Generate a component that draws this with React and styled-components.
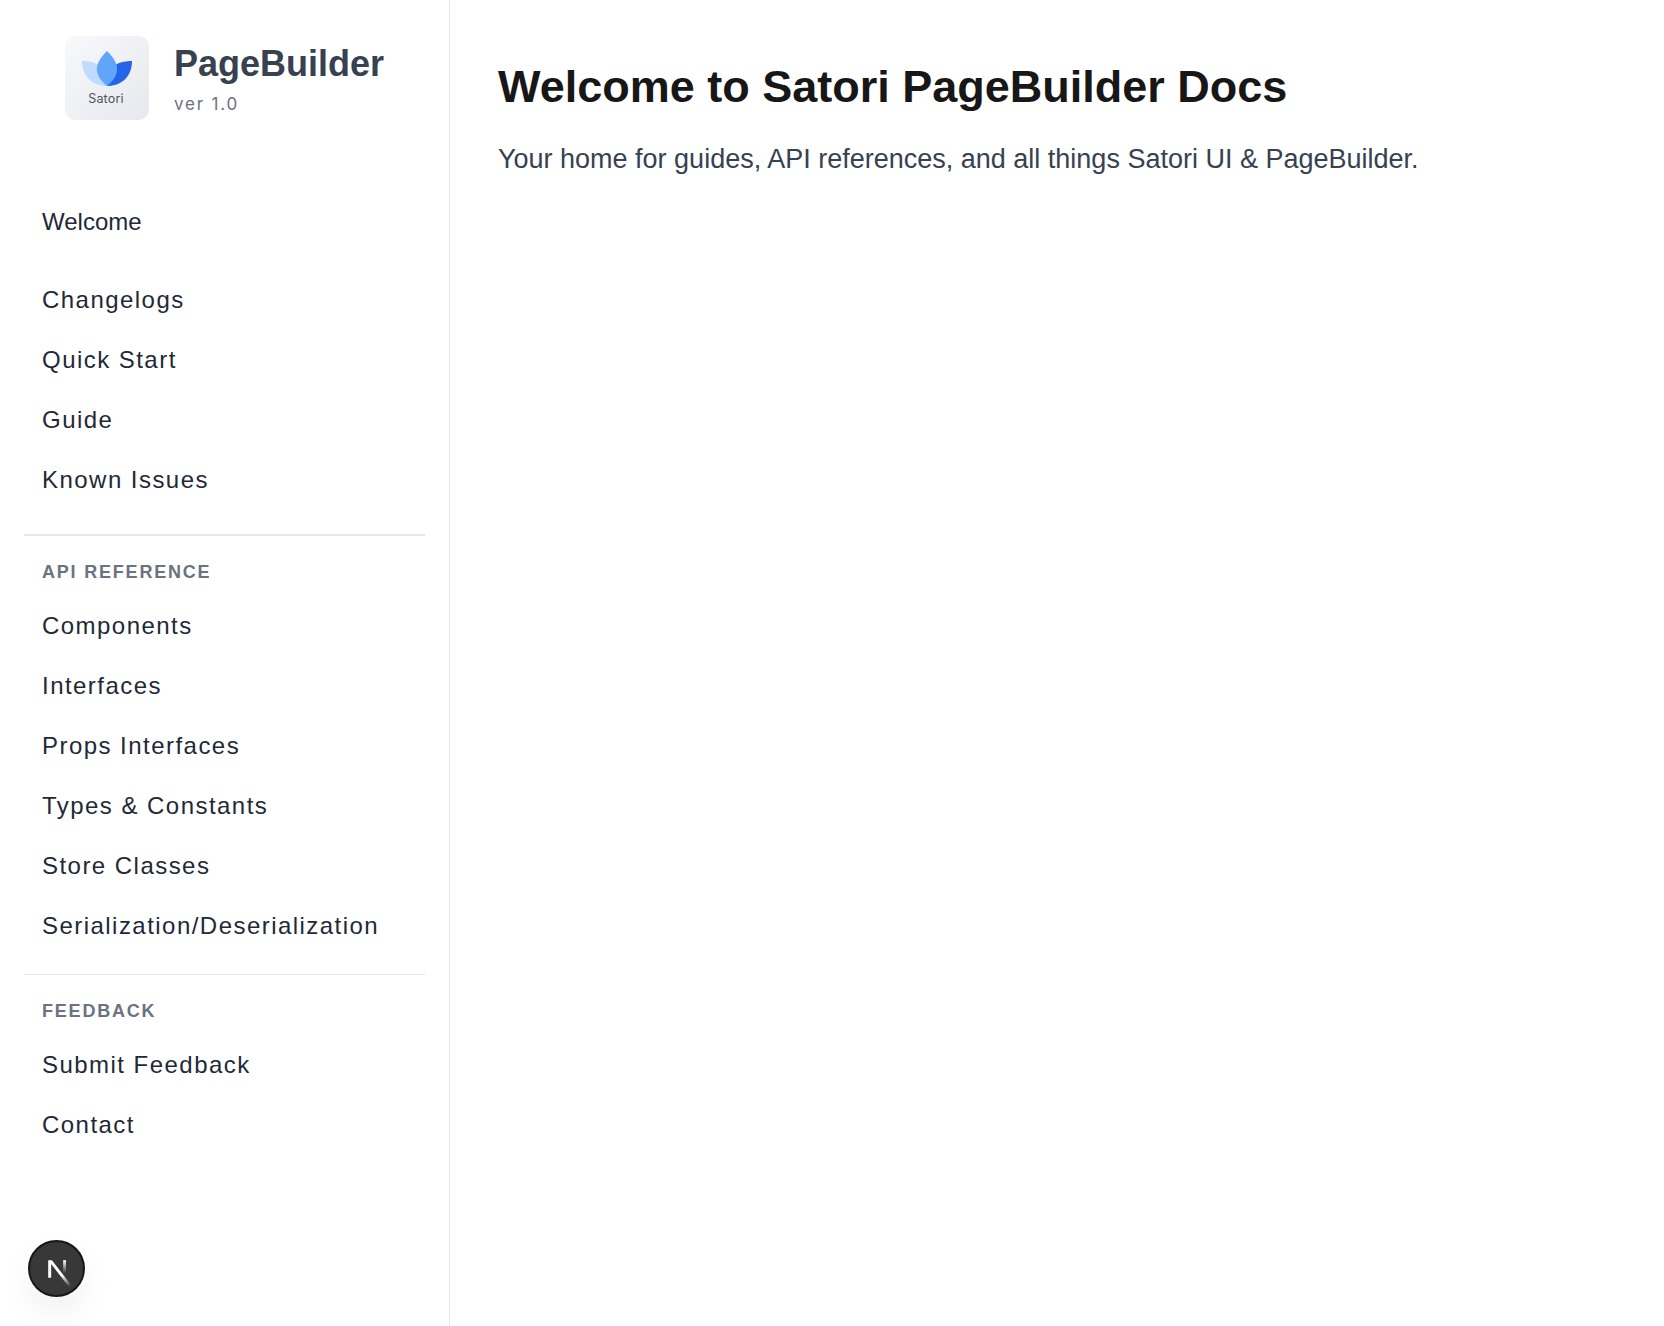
import React from "react";
import styled, { createGlobalStyle } from "styled-components";

const GlobalStyle = createGlobalStyle`
    html, body {
        margin: 0;
        padding: 0;
        background: #fff;
    }
    body {
        font-family: "Liberation Sans", Arial, sans-serif;
    }
`;

const gettingStarted = ["Changelogs", "Quick Start", "Guide", "Known Issues"];
const apiReference = [
    "Components",
    "Interfaces",
    "Props Interfaces",
    "Types & Constants",
    "Store Classes",
    "Serialization/Deserialization",
];
const feedback = ["Submit Feedback", "Contact"];

function App() {
    return (
        <Page>
            <GlobalStyle />
            <Sidebar>
                <Brand>
                    <LogoTile>
                        <svg width="50" height="36" viewBox="0 0 50 36">
                            <path d="M0 10 C8 10 15 12 20 16 L25 35 C10 35 0 25 0 10Z" fill="#bfdbfe" />
                            <path d="M50 10 C42 10 35 12 30 16 L25 35 C40 35 50 25 50 10Z" fill="#2563eb" />
                            <path d="M25 0 C33 8 43 20 25 35 C7 20 17 8 25 0Z" fill="#60a5fa" />
                        </svg>
                        <LogoLabel>Satori</LogoLabel>
                    </LogoTile>
                    <BrandText>
                        <BrandTitle>PageBuilder</BrandTitle>
                        <BrandVersion>ver 1.0</BrandVersion>
                    </BrandText>
                </Brand>

                <WelcomeLink>Welcome</WelcomeLink>

                <NavGroup>
                    {gettingStarted.map((item) => (
                        <NavLink key={item}>{item}</NavLink>
                    ))}
                </NavGroup>
                <Divider $gap={24} $thick={2} />
                <SectionLabel>API Reference</SectionLabel>
                <NavGroup>
                    {apiReference.map((item) => (
                        <NavLink key={item}>{item}</NavLink>
                    ))}
                </NavGroup>
                <Divider $gap={18} $thick={1} />
                <SectionLabel>Feedback</SectionLabel>
                <NavGroup>
                    {feedback.map((item) => (
                        <NavLink key={item}>{item}</NavLink>
                    ))}
                </NavGroup>
            </Sidebar>

            <Main>
                <Title>Welcome to Satori PageBuilder Docs</Title>
                <Lead>Your home for guides, API references, and all things Satori UI &amp; PageBuilder.</Lead>
            </Main>

            <DevBadge>
                <svg width="44" height="44" viewBox="0 0 180 180">
                    <defs>
                        <linearGradient id="ndiag" gradientUnits="userSpaceOnUse" x1="109" y1="116.5" x2="144.5" y2="160.5">
                            <stop stopColor="#fff" />
                            <stop offset="1" stopColor="#fff" stopOpacity="0" />
                        </linearGradient>
                        <linearGradient id="nbar" gradientUnits="userSpaceOnUse" x1="121" y1="54" x2="120.8" y2="106.9">
                            <stop stopColor="#fff" />
                            <stop offset="1" stopColor="#fff" stopOpacity="0" />
                        </linearGradient>
                    </defs>
                    <path
                        d="M149.508 157.52L69.142 54H54V125.97H66.1136V69.3836L139.999 164.845C143.333 162.614 146.509 160.165 149.508 157.52Z"
                        fill="url(#ndiag)"
                    />
                    <rect x="115" y="54" width="12" height="72" fill="url(#nbar)" />
                </svg>
            </DevBadge>
        </Page>
    );
}

export default App;

const Page = styled.div`
    display: flex;
    min-height: 100vh;
`;

const Sidebar = styled.aside`
    box-sizing: border-box;
    flex: 0 0 450px;
    height: 100vh;
    padding: 36px 24px 0;
    border-right: 1px solid #e5e7eb;
    overflow: hidden;
`;

const Brand = styled.div`
    display: flex;
    align-items: flex-start;
    gap: 25px;
    padding-left: 41px;
`;

const LogoTile = styled.div`
    box-sizing: border-box;
    width: 84px;
    height: 84px;
    border-radius: 11px;
    padding-top: 15px;
    background: linear-gradient(135deg, #f8f9fb 0%, #e6e8ed 100%);
    display: flex;
    flex-direction: column;
    align-items: center;
`;

const LogoLabel = styled.span`
    margin-top: 4px;
    margin-right: 2px;
    font-family: Inter, sans-serif;
    font-size: 12.5px;
    line-height: 15px;
    letter-spacing: 0.2px;
    color: #4b5563;
`;

const BrandText = styled.div`
    display: flex;
    flex-direction: column;
`;

const BrandTitle = styled.div`
    font-size: 36px;
    line-height: 54px;
    font-weight: 700;
    color: #374151;
    margin-top: 1px;
`;

const BrandVersion = styled.div`
    font-family: Inter, sans-serif;
    font-size: 17px;
    line-height: 24px;
    letter-spacing: 1.8px;
    color: #6b7280;
    margin-top: 1px;
`;

const NavLink = styled.div`
    height: 60px;
    padding-left: 18px;
    font-size: 24px;
    line-height: 60px;
    letter-spacing: 1.46px;
    color: #1f2937;
`;

const WelcomeLink = styled(NavLink)`
    margin-top: 72px;
    margin-bottom: 18px;
    letter-spacing: 0;
`;

const NavGroup = styled.div`
    display: flex;
    flex-direction: column;
`;

const Divider = styled.hr`
    border: 0;
    height: ${(props) => props.$thick}px;
    margin: ${(props) => props.$gap}px 0 0;
    background: #e5e7eb;
`;

const SectionLabel = styled.div`
    padding-left: 18px;
    margin-top: 24px;
    margin-bottom: 12px;
    font-size: 18px;
    line-height: 24px;
    font-weight: 700;
    letter-spacing: 1.8px;
    text-transform: uppercase;
    color: #6b7280;
`;

const Main = styled.main`
    flex: 1;
    padding: 57px 48px;
`;

const Title = styled.h1`
    margin: 0;
    font-size: 45px;
    line-height: 60px;
    font-weight: 700;
    color: #171717;
`;

const Lead = styled.p`
    margin: 22px 0 0;
    font-size: 27px;
    line-height: 40px;
    color: #374151;
`;

const DevBadge = styled.div`
    position: fixed;
    left: 28px;
    bottom: 29px;
    box-sizing: border-box;
    width: 57px;
    height: 57px;
    border-radius: 50%;
    background: #383838;
    border: 2px solid #171717;
    display: flex;
    align-items: center;
    justify-content: center;
    box-shadow: 0 0 0 1px rgba(255, 255, 255, 0.1), 0 16px 32px rgba(0, 0, 0, 0.06);
`;
